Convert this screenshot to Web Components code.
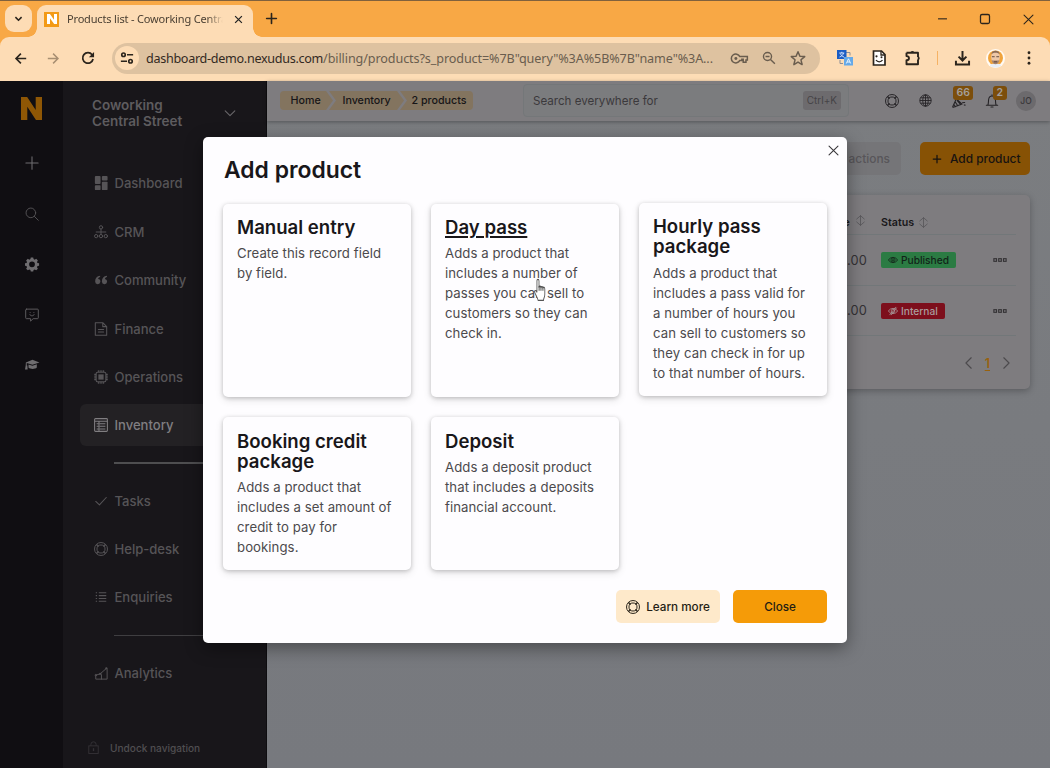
<!DOCTYPE html>
<html lang="en">
<head>
<meta charset="utf-8">
<title>Products list - Coworking Central Street</title>
<style>
html,body{margin:0;padding:0;height:768px;overflow:hidden;background:#77797d}
body{font-family:Inter,"Liberation Sans",sans-serif;font-size:14px}
</style>
</head>
<body>
<nx-desktop></nx-desktop>
<script>
const S = 'fill="none" stroke="currentColor" stroke-linecap="round" stroke-linejoin="round"';
const ICONS = {
  chevdown: `<path ${S} stroke-width="1.2" d="M2.5 5.5 8 11l5.500-5.500"/>`,
  chevbold: `<path fill="none" stroke="currentColor" stroke-width="2.300" d="M3.500 6 8 10.500 12.500 6"/>`,
  left: `<path ${S} stroke-width="1.300" d="M10.500 2 4.500 8l6 6"/>`,
  right: `<path ${S} stroke-width="1.300" d="M5.500 2l6 6-6 6"/>`,
  x: `<path ${S} stroke-width="1.300" d="M2.500 2.500l11 11M13.500 2.500l-11 11"/>`,
  xbold: `<path fill="none" stroke="currentColor" stroke-width="2.200" d="M2 2l12 12M14 2 2 14"/>`,
  plus: `<path ${S} stroke-width="1.200" d="M8 1v14M1 8h14"/>`,
  plusbold: `<path ${S} stroke-width="2" d="M8 2v12M2 8h12"/>`,
  minus: `<path fill="none" stroke="currentColor" stroke-width="1.600" d="M1.500 8.500h13"/>`,
  square: `<rect x="2" y="2" width="12" height="12" rx="2" fill="none" stroke="currentColor" stroke-width="1.700"/>`,
  back: `<path fill="none" stroke="currentColor" stroke-width="2" d="M15 8H2.500M8.500 2 2.500 8l6 6"/>`,
  forward: `<path fill="none" stroke="currentColor" stroke-width="1.800" d="M1 8h12.500M7.500 2l6 6-6 6"/>`,
  reload: `<path fill="none" stroke="currentColor" stroke-width="2" d="M13.800 9.200A6 6 0 1 1 12.700 4.300"/><path fill="currentColor" d="M14.900 1v6H9z"/>`,
  tune: `<g fill="none" stroke="currentColor" stroke-width="1.900"><circle cx="4" cy="4.300" r="2"/><path d="M8 4.300h7M1 11.700h7"/><circle cx="12" cy="11.700" r="2"/></g>`,
  key: `<g fill="none" stroke="currentColor" stroke-width="1.400"><path d="M8.300 6.200A4.200 4.200 0 1 0 8.300 9.800h1.900v-1h1.300v2.700h2.600V9.300h1.300V6.200z"/></g><circle cx="4.600" cy="8" r="1.400" fill="currentColor"/>`,
  zoomout: `<g fill="none" stroke="currentColor" stroke-width="1.600"><circle cx="6.300" cy="6.300" r="4.600"/><path d="M9.700 9.700l5 5M4 6.300h4.600"/></g>`,
  star: `<path fill="none" stroke="currentColor" stroke-width="1.500" stroke-linejoin="round" d="M8 1.700l1.900 4.500 4.800.4-3.700 3.200 1.100 4.800L8 12.100l-4.100 2.500L5 9.800 1.300 6.600l4.800-.4z"/>`,
  translate: `<path d="M9 2.500h4v3M3 10v3.500h3" fill="none" stroke="#8b8f98" stroke-width="1"/><rect x="0" y="0" width="9.500" height="9" fill="#1a5cc4"/><path d="M2.300 3h5M4.800 1.800V3M6.500 3C6 5 4.500 6.300 2.500 7M3.300 3.500C4 5.200 5.300 6.500 7 7" stroke="#dfeaff" stroke-width=".9" fill="none"/><rect x="7" y="7" width="9" height="8.500" fill="#65a9e8"/><path d="M9.300 13.500l2.200-4.700 2.200 4.700M10 12h3" stroke="#e8f4ff" stroke-width="1" fill="none"/>`,
  facepage: `<path fill="#fff" stroke="currentColor" stroke-width="1.700" d="M2.500 1h8L14 4.500V15H2.500z"/><path fill="none" stroke="currentColor" stroke-width="1.300" d="M10 1v4h4M5 10c1.500 2.400 5 2.400 6.500 0"/><circle cx="5.500" cy="6.300" r="1.100" fill="currentColor"/><circle cx="10.500" cy="7.200" r="1" fill="currentColor"/>`,
  puzzle: `<path fill="none" stroke="currentColor" stroke-width="1.900" stroke-linejoin="round" d="M1.500 2.700H13v4.200M13 9.600v4.700H1.500v-4c3.300-.2 3.300-4 0-4.200V2.700"/><path fill="currentColor" d="M5.500 3a1.900 1.900 0 0 1 3.800 0zM12.700 6.200a2 2 0 0 1 0 4z"/>`,
  download: `<path fill="none" stroke="currentColor" stroke-width="2.100" d="M8 0v10M3.800 6 8 10.200 12.200 6M1 10.500v4h14v-4"/>`,
  more: `<g fill="currentColor"><circle cx="8" cy="2" r="1.600"/><circle cx="8" cy="8" r="1.600"/><circle cx="8" cy="14" r="1.600"/></g>`,
  face: `<circle cx="8" cy="8" r="8" fill="#fffaf3"/><circle cx="8" cy="7.500" r="6.300" fill="#f0a33b"/><path d="M3.200 14c.5-2.500 9-2.500 9.600 0C10 16 6 16 3.200 14z" fill="#e9eef5"/><ellipse cx="8" cy="7" rx="3.600" ry="5.600" fill="#edc7a7"/><path d="M4.500 4.500C4.800 .6 11.200 .6 11.500 4.500 10.500 2.600 5.500 2.600 4.500 4.500z" fill="#8a6a55"/><path d="M4.800 9c.4 5.200 6 5.200 6.400 0-.8 1-1.600.6-3.200.6S5.600 10 4.800 9z" fill="#a5826b"/><path d="M5 6.500h2.300M8.700 6.500H11M6.700 10.800h2.600" stroke="#5c463c" stroke-width=".8"/>`,
  search: `<g ${S} stroke-width="1.100"><circle cx="6.700" cy="6.700" r="5.500"/><path d="M10.700 10.700l4.500 4.500"/></g>`,
  gear: `<path fill="currentColor" fill-rule="evenodd" d="M6.600.5h2.800l.4 1.900 1.300.6 1.700-1 1.900 1.900-1 1.700.6 1.200 1.800.4v2.700l-1.800.5-.6 1.200 1 1.700-1.900 1.900-1.700-1-1.300.6-.4 1.800H6.600l-.4-1.800-1.300-.6-1.700 1-1.900-1.900 1-1.700-.6-1.200L0 9.900V7.200l1.800-.4.5-1.200-1-1.700L3.200 2l1.700 1 1.300-.6zM8 5a3.300 3.300 0 1 0 0 6.600A3.300 3.300 0 0 0 8 5z"/>`,
  smile: `<g ${S} stroke-width="1.100"><path d="M1.800 1.300h12.400q1 0 1 1v8.900q0 1-1 1H9.300L6.400 15v-2.800H1.800q-1 0-1-1V2.300q0-1 1-1z"/><path d="M5.500 7.500c.8 2 4.200 2 5 0M5.800 5.200h.1M10.100 5.200h.1"/></g>`,
  cap: `<path fill="currentColor" d="M8.500 2 16.500 5 8.500 7.800 2 5.800v2.700h.7L3 13H0l.8-4.500.2-3.300zM4 7.500l4.500 1.400L13.500 7v3.800c-2 2.200-7.500 2.200-9.500 0z"/>`,
  dashboard: `<g fill="currentColor"><rect x="1" y="0" width="6.500" height="9" rx="1"/><rect x="9" y="0" width="6.500" height="5" rx="1"/><rect x="1" y="10.500" width="6.500" height="5.500" rx="1"/><rect x="9" y="6.500" width="6.500" height="9.500" rx="1"/></g>`,
  crm: `<g ${S} stroke-width="1.100"><circle cx="8" cy="2.700" r="1.900"/><circle cx="2.500" cy="12.700" r="1.900"/><circle cx="8" cy="12.700" r="1.900"/><circle cx="13.500" cy="12.700" r="1.900"/><path d="M8 4.800v5.500M2.500 8h11"/></g>`,
  quote: `<path fill="currentColor" d="M7 3C3.300 3.300 1.300 5.500 1.300 9.800a3 3 0 1 0 3.400-3C4.900 5.700 5.600 5 7 4.500zM14.800 3C11 3.300 9 5.500 9 9.800a3 3 0 1 0 3.500-3c.2-1.100.9-1.800 2.300-2.300z"/>`,
  doc: `<g ${S} stroke-width="1.200"><path d="M1.500.8H10l4.500 4.400v10H1.500zM10 .8v4.500h4.500M5 8.500h6M5 11.500h6"/></g>`,
  chip: `<g fill="none" stroke="currentColor" stroke-width="1.200"><rect x="2.500" y="2.500" width="11" height="11" rx="1.500"/><path d="M5 .3v2M7 .3v2M9 .3v2M11 .3v2M5 13.700v2M7 13.700v2M9 13.700v2M11 13.700v2M.3 5h2M.3 7h2M.3 9h2M.3 11h2M13.700 5h2M13.700 7h2M13.700 9h2M13.700 11h2"/></g><rect x="5" y="5" width="6" height="6" fill="currentColor"/>`,
  inventory: `<g fill="none" stroke="currentColor" stroke-width="1.200"><rect x=".7" y=".7" width="14.600" height="14.600" rx="1"/><path d="M.7 3.700h14.600M3 6.500h2M6.500 6.500H13M3 9.500h2M6.500 9.500H13M3 12.500h2M6.500 12.500H13M5.700 4v11"/></g>`,
  check: `<path ${S} stroke-width="1.200" d="M2 8.500 6.200 12.500 14 4"/>`,
  life: `<g fill="none" stroke="currentColor" stroke-width="1.100"><circle cx="8" cy="8" r="7.400"/><circle cx="8" cy="8" r="4.600"/><path d="M2.400 3.200l2.600 1.800M3.200 2.400l1.800 2.600M12.800 2.400l-1.800 2.600M13.600 3.200l-2.600 1.800M2.400 12.800l2.600-1.800M3.200 13.600l1.800-2.600M12.800 13.600l-1.800-2.600M13.600 12.800l-2.600-1.800"/></g>`,
  list: `<path fill="none" stroke="currentColor" stroke-width="1.200" d="M2 3.200h1.500M5.500 3.200H14M2 6.400h1.500M5.500 6.400H14M2 9.600h1.500M5.500 9.600H14M2 12.800h1.500M5.500 12.800H14"/>`,
  analytics: `<g ${S} stroke-width="1.100"><path d="M2 11.500V15h13V4M2 10.500l5-1.500 7.500-6.500M8.500 10v5"/><circle cx="2" cy="10.500" r=".8"/><circle cx="7" cy="9" r=".8"/><circle cx="14" cy="2.600" r=".8"/></g>`,
  lock: `<g fill="none" stroke="currentColor" stroke-width="1.100"><rect x="2.200" y="6" width="11.600" height="9.300"/><path d="M4.800 6V4.200a3.200 3.200 0 0 1 6.400 0V6"/></g><path fill="currentColor" d="M7.200 8.800h1.600v3.600H7.200z"/>`,
  globe: `<g fill="none" stroke="currentColor" stroke-width="1.100"><circle cx="8" cy="8" r="7"/><ellipse cx="8" cy="8" rx="3.400" ry="7"/><path d="M1 8h14M2 4.700h12M2 11.300h12M8 1v14"/></g>`,
  party: `<g ${S} stroke-width="1.200"><path d="M5 5.500.8 14.500q0 .8.800.7L11.500 11.500zM3.600 9l3 4.500M6 7.500l4 4.600M2.300 12l1.500 2.500M12 10l2.500-.3M14 12.500l1 .2M10 5l1-2"/></g>`,
  bell: `<g ${S} stroke-width="1.200"><path d="M1.500 12.800h13M3.300 12.600c.8-2 .5-4 .8-6C4.500 3.500 6 2.300 8 2.300s3.500 1.200 3.900 4.300c.3 2 0 4 .8 6M8 2V.8M6.800 14.900h2.400"/></g>`,
  sort: `<path ${S} stroke-width="1.200" d="M8 1v14M2.500 5.800 8 1l5.500 4.800M2.500 10.200 8 15l5.500-4.800"/>`,
  eye: `<g fill="none" stroke="currentColor" stroke-width="1.300"><path d="M.8 8C3.500 2.500 12.500 2.500 15.200 8 12.500 13.500 3.500 13.500.8 8z"/><circle cx="8" cy="8" r="3.300"/></g><circle cx="8" cy="8" r="1.400" fill="currentColor"/>`,
  eyeoff: `<g fill="none" stroke="currentColor" stroke-width="1.200"><path d="M.8 8C3.500 2.500 12.500 2.500 15.200 8 12.500 13.500 3.500 13.500.8 8z"/><circle cx="8" cy="8" r="3"/><path d="M2.500 14.500l10-13M5 14.500l9-12"/></g>`,
  dots: `<g fill="none" stroke="currentColor" stroke-width="1.300"><rect x="1" y="6.500" width="3" height="3"/><rect x="6.500" y="6.500" width="3" height="3"/><rect x="12" y="6.500" width="3" height="3"/></g>`,
  nlogo: `<path fill="currentColor" d="M0 0h4.700l6.500 9V0H16v16h-4.600L4.800 6.700V16H0z"/>`,
  hand: `<path fill="#fff" stroke="#555" stroke-width=".9" stroke-linejoin="round" d="M4.200 9.500V1.500c0-1.700 2.200-1.700 2.200 0V6c.3-1.300 2-1 2.100.2.400-1 2-.8 2.100.3.500-.9 2-.5 2 .7v3.800c0 2.300-1.400 3-1.400 4.600H5.500c-.2-1.700-3-4.200-3.800-6.100-.4-1.300 1.400-1.700 2.500 0z"/><path stroke="#333" stroke-width=".9" d="M6.500 5v3.500M8.500 5.500v3M10.600 6v2.500"/>`
};

class NxBase extends HTMLElement {
  constructor(){ super(); this.attachShadow({mode:'open'}); }
  connectedCallback(){ this.shadowRoot.innerHTML = `<style>*{box-sizing:border-box}:host{box-sizing:border-box}${this.css()}</style>${this.html()}`; }
}
const def = (tag, css, html) => customElements.define(tag, class extends NxBase {
  css(){ return typeof css === 'function' ? css(this) : css; }
  html(){ return typeof html === 'function' ? html(this) : html; }
});
const A = (e, n, d='') => e.getAttribute(n) ?? d;

def('nx-icon', e => `:host{display:block;flex:none;width:${A(e,'w',A(e,'size','16'))}px;height:${A(e,'size','16')}px}svg{display:block;width:100%;height:100%;overflow:visible}`,
  e => `<svg viewBox="0 0 16 16" preserveAspectRatio="${e.hasAttribute('w')?'none':'xMidYMid'}" aria-hidden="true">${ICONS[A(e,'name')]}</svg>`);

/* ---------- browser window ---------- */
def('browser-tab', `:host{display:flex;align-items:center;width:216px;height:32px;padding:0 9px 4px 7px;background:#fddcb5;border-radius:9px 9px 0 0;color:#4b4033;position:relative}
:host::before,:host::after{content:"";position:absolute;bottom:0;width:9px;height:9px}
:host::before{left:-9px;background:radial-gradient(circle at 0 0,transparent 8.500px,#fddcb5 9px)}
:host::after{right:-9px;background:radial-gradient(circle at 100% 0,transparent 8.500px,#fddcb5 9px)}
.fav{width:15px;height:15px;background:#f39a16;display:grid;place-items:center;flex:none}
.t{margin-left:8px;width:156px;overflow:hidden;white-space:nowrap;font:11px/16px "Noto Sans",sans-serif;letter-spacing:-.17px;-webkit-mask-image:linear-gradient(90deg,#000 90%,transparent);mask-image:linear-gradient(90deg,#000 90%,transparent)}
nx-icon{color:#222}.x{margin-left:11px}.fav nx-icon{color:#fff}`,
`<span class="fav"><nx-icon name="nlogo" size="10"></nx-icon></span><span class="t"><slot></slot></span><nx-icon class="x" name="xbold" size="9"></nx-icon>`);

def('browser-chrome', `:host{display:block;height:81px;background:#f8a845;border-top:1px solid #80613d;color:#2b241c}
.strip{height:36px;display:flex;align-items:flex-start;padding:4px 15px 0 5px}
.drop{width:27px;height:27px;border-radius:9px;background:#fddcb5;display:grid;place-items:center;margin-right:5px;flex:none}
.strip>nx-icon{margin-top:7px}.new{margin-left:12px}.gap{flex:1}.strip .w{margin-left:31px;margin-top:8px}
.bar{height:44px;background:#fddcb5;border-radius:9px 9px 0 0;display:flex;align-items:center;padding:0 14px 2px}
.omni{margin-left:17px;width:708px;height:31px;border-radius:16px;background:#dec2a0;display:flex;align-items:center;padding:0 14px 0 3px;color:#6a5d4e}
.site{width:24px;height:24px;border-radius:50%;background:#fddcb5;display:grid;place-items:center;margin-right:7px;color:#2b241c;flex:none}
.url{font:12.600px "Noto Sans",sans-serif;width:585px;flex:none;white-space:nowrap;overflow:hidden;color:#6a5d4e;letter-spacing:-.1px}.url b{font-weight:400;color:#33291f;letter-spacing:-.3px}
.omni nx-icon.s{margin-left:14px}.sep{width:2px;height:14px;background:#f6b263;margin:0 17px 0 16px}
.edge{height:1px;background:#8d7d68}`,
`<div class="strip"><span class="drop"><nx-icon name="chevbold" size="11"></nx-icon></span><browser-tab>Products list - Coworking Central</browser-tab><nx-icon class="new" name="plusbold" size="13"></nx-icon><span class="gap"></span><nx-icon class="w" name="minus" size="11"></nx-icon><nx-icon class="w" name="square" size="12"></nx-icon><nx-icon class="w" name="x" size="13"></nx-icon></div>
<div class="bar"><nx-icon name="back" size="13"></nx-icon><nx-icon name="forward" size="13" style="margin-left:20px;color:#a88f72"></nx-icon><nx-icon name="reload" size="14" style="margin-left:21px"></nx-icon>
<div class="omni"><span class="site"><nx-icon name="tune" size="14"></nx-icon></span><span class="url"><b>dashboard-demo.nexudus.com</b>/billing/products?s_product=%7B"query"%3A%5B%7B"name"%3A...</span><nx-icon name="key" size="17"></nx-icon><nx-icon class="s" name="zoomout" size="14"></nx-icon><nx-icon class="s" name="star" size="16"></nx-icon></div>
<nx-icon name="translate" size="16" style="margin-left:17px"></nx-icon><nx-icon name="facepage" size="16" style="margin-left:18px"></nx-icon><nx-icon name="puzzle" size="16" style="margin-left:18px"></nx-icon><span class="sep"></span><nx-icon name="download" size="15"></nx-icon><nx-icon name="face" size="19" style="margin-left:16px"></nx-icon><nx-icon name="more" size="14" style="margin-left:17px"></nx-icon></div><div class="edge"></div>`);

/* ---------- navigation ---------- */
def('nav-rail', `:host{display:flex;flex-direction:column;align-items:center;width:63px;background:#100e12;padding-top:16px;color:#6f6d70;flex:none}
nx-icon{margin-bottom:36.500px}.logo{color:#8f5705;margin-bottom:36px}.dim{color:#535154}`,
`<nx-icon class="logo" name="nlogo" size="23" w="21"></nx-icon><nx-icon name="plus" size="14"></nx-icon><nx-icon class="dim" name="search" size="14"></nx-icon><nx-icon name="gear" size="14"></nx-icon><nx-icon name="smile" size="14" style="color:#5f5d60"></nx-icon><nx-icon name="cap" size="14"></nx-icon>`);

def('nav-item', `:host{display:flex;align-items:center;height:42px;margin:0 17px 6.450px 17px;padding-left:14px;border-radius:6px;color:#565457;font-weight:500;font-size:13.050px;flex:none}
:host([active]){background:#232124;color:#807e81}
nx-icon{margin-right:6.500px}`,
e => `<nx-icon name="${A(e,'icon')}" size="${A(e,'size','14')}"></nx-icon><slot></slot>`);

def('side-nav', `:host{display:flex;flex-direction:column;width:204px;background:#18161a;flex:none;color:#59575a;border-right:1px solid #0e0d10}
.loc{display:flex;align-items:center;padding:16px 29px 0 29px;font:600 13.500px/16px Inter,sans-serif;color:#5e5c5f;margin-bottom:33.200px}
.loc span{flex:1}.loc nx-icon{color:#69676a}
hr{border:0;height:1px;background:#3f3e41;margin:10px 0 16px 51px;flex:none}hr.b{height:2px;background:#4e4e50;margin-top:9px;margin-bottom:15.800px}
.undock{margin-top:auto;display:flex;align-items:center;padding:0 0 14px 24px;font-size:10.100px;font-weight:500;color:#504e51}.undock nx-icon{margin-right:10px;color:#353337}`,
`<div class="loc"><span>Coworking<br>Central Street</span><nx-icon name="chevdown" size="14"></nx-icon></div>
<nav-item icon="dashboard">Dashboard</nav-item><nav-item icon="crm">CRM</nav-item><nav-item icon="quote">Community</nav-item><nav-item icon="doc">Finance</nav-item><nav-item icon="chip">Operations</nav-item><nav-item icon="inventory" active>Inventory</nav-item>
<hr class="b"><nav-item icon="check">Tasks</nav-item><nav-item icon="life">Help-desk</nav-item><nav-item icon="list">Enquiries</nav-item><hr><nav-item icon="analytics">Analytics</nav-item>
<div class="undock"><nx-icon name="lock" size="13"></nx-icon>Undock navigation</div>`);

/* ---------- top bar ---------- */
def('crumb-step', `:host{display:flex;align-items:center;height:19px;background:#83745f;color:#171517;font-size:10.700px;font-weight:500;margin-right:-4px}
:host([pos=first]){width:53px;padding-left:10.500px;border-radius:4px 0 0 4px;clip-path:polygon(0 0,46px 0,100% 50%,46px 100%,0 100%)}
:host([pos=mid]){width:75px;padding-left:13.500px;clip-path:polygon(0 0,68px 0,100% 50%,68px 100%,0 100%,7px 50%)}
:host([pos=last]){width:73px;padding-left:11.500px;border-radius:0 4px 4px 0;margin:0;clip-path:polygon(0 0,100% 0,100% 100%,0 100%,7px 50%)}`, `<slot></slot>`);

def('count-badge', `:host{position:absolute;display:block;background:#7c4e0b;color:#a39f9c;border-radius:3px;font:600 10.500px/14px Inter,sans-serif;padding:0 3.500px;text-align:center}`, `<slot></slot>`);

def('top-bar', `:host{display:flex;align-items:center;height:40px;background:#7e7c7f;padding:0 14px 1px 13px;box-shadow:0 1px 4px #0005;color:#242225;position:relative}
.crumbs{display:flex;width:193px;flex:none}.search{margin-left:50px;width:326px;height:33px;border:1px solid #747779;border-radius:4px;background:#7b7c7e;display:flex;align-items:center;justify-content:space-between;padding:0 7px 0 9px;font-size:11.600px;color:#3b393c;flex:none}
kbd{font:10px/19px Inter,sans-serif;background:#6d6b6e;border-radius:3px;padding:0 4px;color:#454346}
.i{position:relative;margin-left:19px}.av{margin-left:17px;width:20px;height:20px;border-radius:50%;background:#6c6a6d;font:500 8.500px/20px Inter,sans-serif;text-align:center;color:#39373a;flex:none}`,
`<div class="crumbs"><crumb-step pos="first">Home</crumb-step><crumb-step pos="mid">Inventory</crumb-step><crumb-step pos="last">2 products</crumb-step></div>
<div class="search"><span>Search everywhere for</span><kbd>Ctrl+K</kbd></div>
<div class="i" style="margin-left:36px"><nx-icon name="life" size="14"></nx-icon></div><div class="i" style="margin-left:20px"><nx-icon name="globe" size="13"></nx-icon></div><div class="i" style="margin-left:20px"><nx-icon name="party" size="14"></nx-icon><count-badge style="left:1px;top:-8px">66</count-badge></div><div class="i"><nx-icon name="bell" size="14"></nx-icon><count-badge style="left:8px;top:-8px">2</count-badge></div><div class="av">JO</div>`);

/* ---------- product list ---------- */
def('status-tag', `:host{display:inline-flex;align-items:center;height:16px;padding:0 7px;border-radius:2px;font-size:10.200px;font-weight:500;background:#2b7b43;color:#122319}
:host([kind=internal]){background:#7d0f1c;color:#aa9c9e}nx-icon{margin-right:3px}`,
e => `<nx-icon name="${A(e,'kind')==='internal'?'eyeoff':'eye'}" size="10"></nx-icon><slot></slot>`);

def('product-table', `:host{display:block;height:194px;background:#7e7c7f;border-radius:5px;box-shadow:0 2px 7px #0004;padding:14px 14px 0;color:#242225}
.r{display:grid;grid-template-columns:1fr 135px;align-items:center;height:50.500px;padding-top:1px;border-bottom:1px solid #727779}
.p{text-align:right;padding-right:14px;font-size:12.800px;letter-spacing:.15px;color:#333134}
.h{height:26px;font-size:10.700px;font-weight:600;color:#19171a}
.h .p{display:flex;justify-content:flex-end;gap:5px;padding-right:15px;font-size:11px;color:#19171a}
.s{display:flex;align-items:center;justify-content:space-between;padding-right:9.500px;color:#343235}.h .s{justify-content:flex-start;gap:4px;color:#19171a}.h nx-icon{color:#58565a}
.pg{display:flex;justify-content:flex-end;align-items:center;gap:9px;height:54px;padding-right:3px;color:#4c4a4d}.pg u{font-size:12.500px;font-weight:600;color:#98610d;text-underline-offset:2px}`,
`<div class="r h"><div class="p">Price<nx-icon name="sort" size="11"></nx-icon></div><div class="s">Status<nx-icon name="sort" size="11"></nx-icon></div></div>
<div class="r"><div class="p">15.00</div><div class="s"><status-tag kind="published">Published</status-tag><nx-icon name="dots" size="14"></nx-icon></div></div>
<div class="r"><div class="p">15.00</div><div class="s"><status-tag kind="internal">Internal</status-tag><nx-icon name="dots" size="14"></nx-icon></div></div>
<div class="pg"><nx-icon name="left" size="14"></nx-icon><u>1</u><nx-icon name="right" size="14"></nx-icon></div>`);

def('products-page', `:host{display:block;flex:1;min-width:0;background:linear-gradient(#7b7d80,#77797e)}
.tools{display:flex;justify-content:flex-end;gap:19px;padding:21px 20px 20px}
.btn{height:33px;border-radius:5px;display:flex;align-items:center;font-size:11.900px;font-weight:500}
.bulk{background:#757578;color:#58565a;padding:0 11px}.add{background:#875205;color:#171311;width:110px;padding-left:12px;gap:8px}
product-table{margin:0 20px}`,
`<top-bar></top-bar><div class="tools"><div class="btn bulk">actions</div><div class="btn add"><nx-icon name="plusbold" size="10"></nx-icon>Add product</div></div><product-table></product-table>`);

/* ---------- dialog ---------- */
def('option-card', `:host{display:block;background:#fefdff;border-radius:5px;padding:13px 14px 12px;box-shadow:0 1px 4px #0003,0 3px 9px #0000001c;color:#4c4a4d}
:host([raised]){margin:-1px 0 1px}:host([low]){padding-top:14px}
h3{margin:0 0 6px;font:600 18.600px/20px Inter,sans-serif;color:#19171a}:host([hover]) h3{text-decoration:underline;text-decoration-thickness:1.500px;text-underline-offset:2px}
:host([raised]) h3{margin-bottom:7px}
p{margin:0;font:400 13.200px/20px Inter,sans-serif;letter-spacing:.06px;white-space:nowrap}`,
e => `<h3>${A(e,'heading')}</h3><p><slot></slot></p>`);

def('nx-button', `:host{display:flex;align-items:center;justify-content:center;height:33px;padding-top:1px;border-radius:5px;background:#f59b08;color:#231d14;font-size:11.700px;font-weight:500;width:94px}
:host([soft]){background:#fee9ca;width:104px;gap:6px}`, `<slot></slot>`);

def('add-dialog', `:host{display:flex;flex-direction:column;width:643.500px;height:506px;background:#fefdff;border-radius:5px;padding:20px 19.500px 20px 20px;box-shadow:0 5px 18px #0006}
h2{margin:0 0 20px;font:600 22.900px/27px Inter,sans-serif;color:#19171a;padding-left:1px}
.close{position:absolute;right:7px;top:7px;color:#39373a}
.grid{display:grid;grid-template-columns:repeat(3,188px);grid-template-rows:193px 153px;gap:20px}
.actions{display:flex;justify-content:flex-end;gap:13px;margin-top:auto}
.cursor{position:absolute;left:330px;top:141.500px}`,
`<h2>Add product</h2><nx-icon class="close" name="x" size="13"></nx-icon>
<div class="grid"><option-card heading="Manual entry">Create this record field<br>by field.</option-card>
<option-card hover heading="Day pass">Adds a product that<br>includes a number of<br>passes you can sell to<br>customers so they can<br>check in.</option-card>
<option-card raised heading="Hourly pass package">Adds a product that<br>includes a pass valid for<br>a number of hours you<br>can sell to customers so<br>they can check in for up<br>to that number of hours.</option-card>
<option-card low heading="Booking credit package">Adds a product that<br>includes a set amount of<br>credit to pay for<br>bookings.</option-card>
<option-card low heading="Deposit">Adds a deposit product<br>that includes a deposits<br>financial account.</option-card></div>
<div class="actions"><nx-button soft><nx-icon name="life" size="14"></nx-icon>Learn more</nx-button><nx-button>Close</nx-button></div>
<nx-icon class="cursor" name="hand" size="22" w="15"></nx-icon>`);

def('nx-desktop', `:host{display:flex;flex-direction:column;width:1050px;height:768px;overflow:hidden;position:relative}
.app{display:flex;flex:1;min-height:0}add-dialog{position:absolute;left:203px;top:137px}`,
`<browser-chrome></browser-chrome><div class="app"><nav-rail></nav-rail><side-nav></side-nav><products-page></products-page></div><add-dialog></add-dialog>`);
</script>
</body>
</html>
